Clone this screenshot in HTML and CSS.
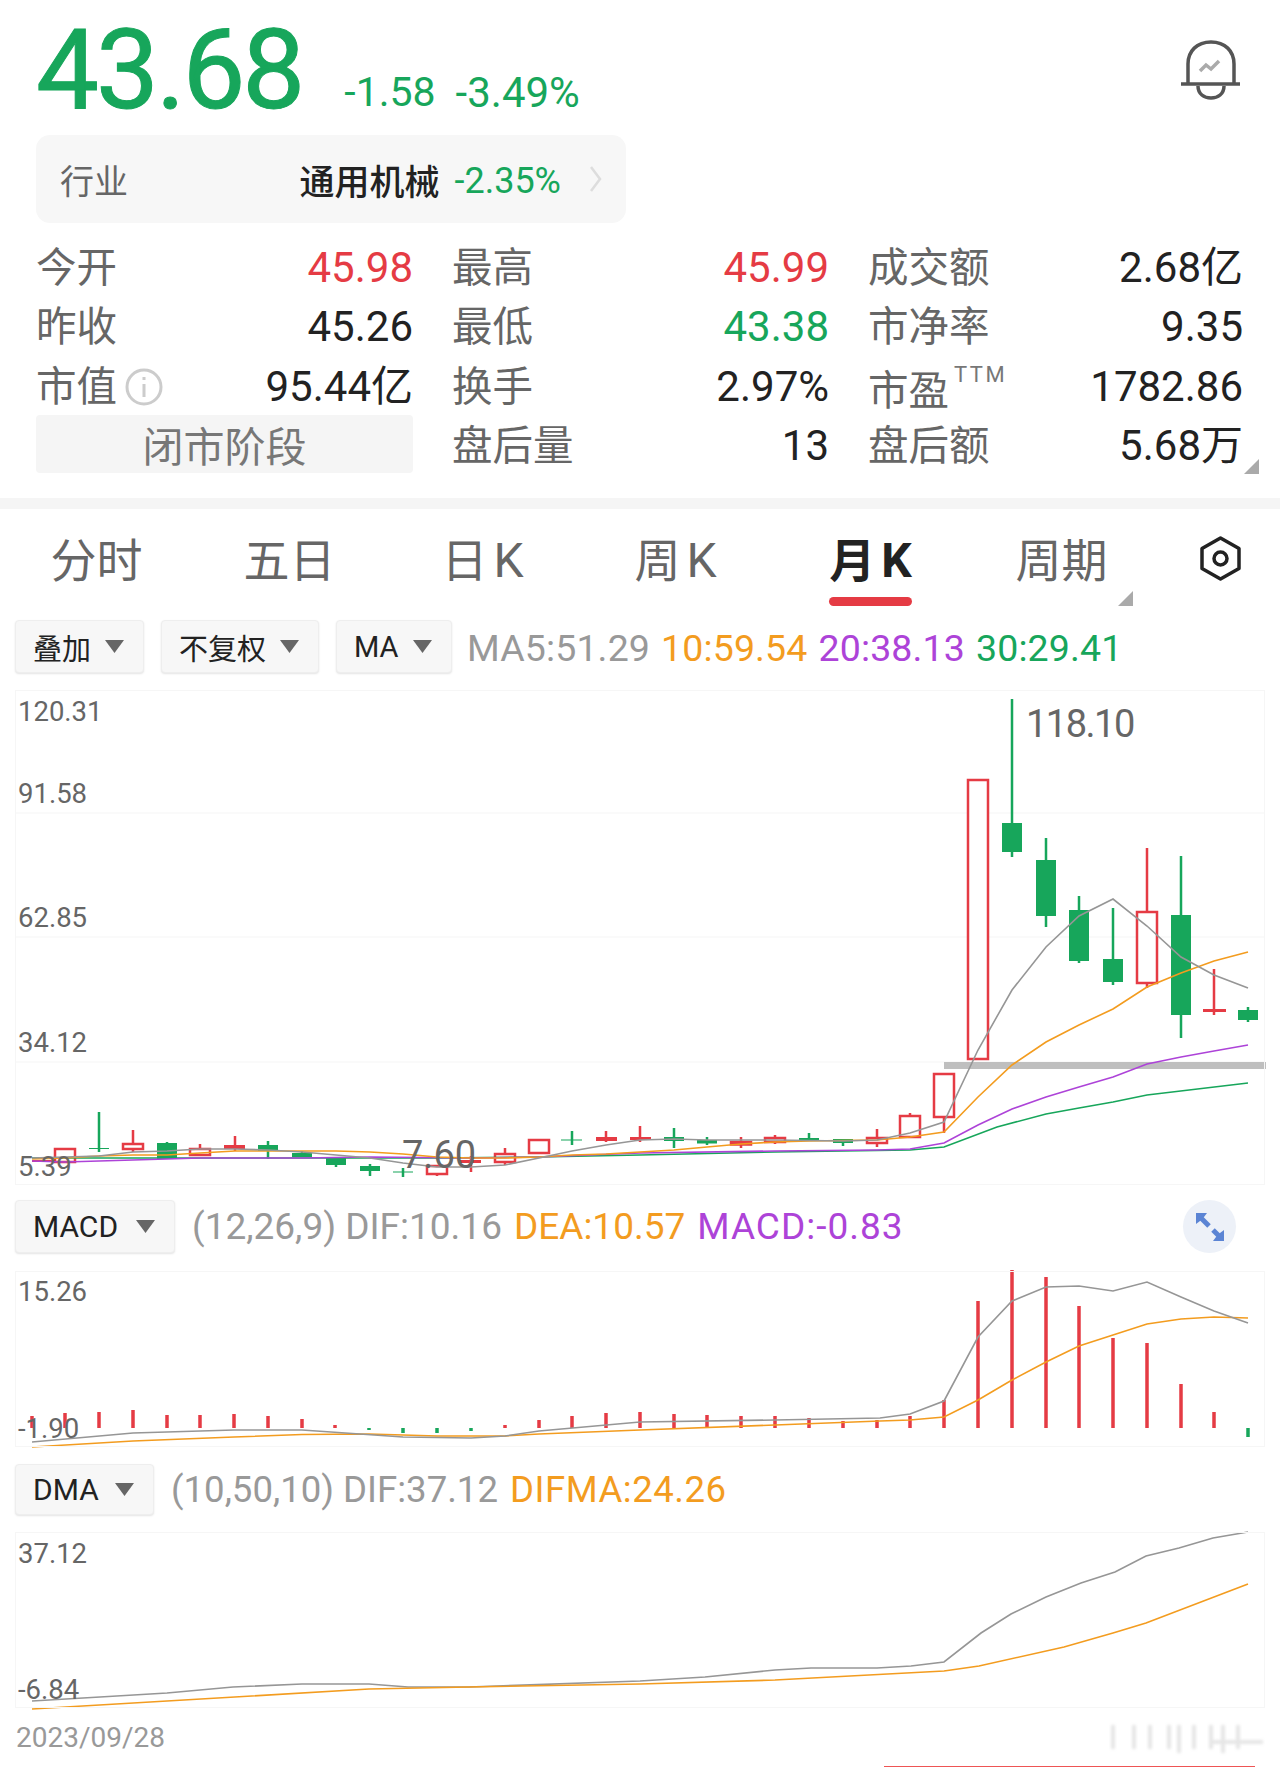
FILE: index.html
```html
<!DOCTYPE html>
<html lang="zh">
  <head>
    <meta charset="UTF-8" />
    <title>43.68 月K</title>
    <link rel="stylesheet" href="styles.css">
  </head>
  <body>
    <div class="head">
      <div class="price">43.68</div>
      <div class="change">-1.58</div>
      <div class="change change-pct">-3.49%</div>
      <svg class="bell" width="60" height="60" viewBox="0 0 60 60">
        <path class="bell-line" d="M7 43V24C7 11 16 2 30 2s23 9 23 22v19" />
        <path class="bell-line" d="M0 44H59" />
        <path class="bell-line" d="M17 46c0 8 6 12 13 12s13-4 13-12" />
        <path class="bell-zig" d="M19 31l6-6 5 4 8-8" />
      </svg>
    </div>

    <div class="industry">
      <span class="industry-label">行业</span>
      <span class="industry-name">通用机械</span>
      <span class="industry-pct">-2.35%</span>
      <svg class="chevron" width="13" height="28" viewBox="0 0 13 28">
        <path d="M2 2l9 12-9 12" />
      </svg>
    </div>

    <div class="stats">
      <div class="cell"><span class="lbl">今开</span><span class="val up">45.98</span></div>
      <div class="cell"><span class="lbl">最高</span><span class="val up">45.99</span></div>
      <div class="cell"><span class="lbl">成交额</span><span class="val">2.68亿</span></div>

      <div class="cell"><span class="lbl">昨收</span><span class="val">45.26</span></div>
      <div class="cell"><span class="lbl">最低</span><span class="val down">43.38</span></div>
      <div class="cell"><span class="lbl">市净率</span><span class="val">9.35</span></div>

      <div class="cell">
        <span class="lbl lbl-info">市值
          <svg class="info" width="38" height="38" viewBox="0 0 38 38">
            <circle cx="19" cy="19" r="17" />
            <path d="M19 16v13M19 9v3" />
          </svg>
        </span>
        <span class="val">95.44亿</span>
      </div>
      <div class="cell"><span class="lbl">换手</span><span class="val">2.97%</span></div>
      <div class="cell">
        <span class="lbl lbl-pe">市盈<span class="ttm">TTM</span></span>
        <span class="val">1782.86</span>
      </div>

      <div class="cell cell-phase">闭市阶段</div>
      <div class="cell"><span class="lbl">盘后量</span><span class="val">13</span></div>
      <div class="cell"><span class="lbl">盘后额</span><span class="val">5.68万</span></div>
      <span class="corner corner-stats"></span>
    </div>

    <div class="divider"></div>

    <div class="tabs">
      <div class="tab"><span class="tab-label">分时</span></div>
      <div class="tab"><span class="tab-label">五日</span></div>
      <div class="tab"><span class="tab-label">日<span class="tab-k">K</span></span></div>
      <div class="tab"><span class="tab-label">周<span class="tab-k">K</span></span></div>
      <div class="tab tab-on"><span class="tab-label">月<span class="tab-k">K</span></span></div>
      <div class="tab"><span class="tab-label">周期</span><span class="corner corner-tab"></span></div>
      <svg class="gear" width="41" height="45" viewBox="0 0 41 45">
        <path d="M20.5 2L39 12.5V32.5L20.5 43L2 32.5V12.5Z" />
        <circle cx="20.5" cy="22.5" r="6.5" />
      </svg>
    </div>

    <div class="tools">
      <div class="pick pick-overlay">叠加<i class="caret"></i></div>
      <div class="pick pick-adjust">不复权<i class="caret"></i></div>
      <div class="pick pick-ma">MA<i class="caret"></i></div>
      <div class="legend legend-ma">
        <span class="c-gray">MA5:51.29</span>
        <span class="c-orange">10:59.54</span>
        <span class="c-purple">20:38.13</span>
        <span class="c-green">30:29.41</span>
      </div>
    </div>

    <svg class="chart chart-main" viewBox="15 690 1250 495">
      <path class="grid" d="M15 813H1265M15 937H1265M15 1062H1265" />
      <rect class="floor" x="944" y="1062" width="322" height="7" />

      <!-- wicks -->
      <path class="wick-g" d="M99 1112V1152M167 1142V1159M268 1141V1159M302 1151V1157M336 1158V1167M370 1164V1176M403 1168V1177M674 1128V1148M707 1137V1145M809 1133V1141M843 1139V1146M1012 699V857M1046 838V927M1079 896V963M1113 908V985M1181 856V1038M1248 1007V1022" />
      <path class="wick-g wick-thin" d="M89 1148.5H109M393 1172H413M561 1140H582" />
      <path class="wick-g" d="M572 1131V1145" />
      <path class="wick-r" d="M133 1130V1152M200 1144V1156M235 1136V1151M437 1172V1176M471 1156V1172M505 1148V1165M606 1131V1142M640 1126V1142M741 1137V1148M775 1135V1144M877 1129V1147M910 1113V1116M944 1115V1133M1147 848V988M1214 969V1015" />

      <!-- bodies -->
      <path class="body-g" d="M157 1143h20v16h-20zM258 1145h20v6h-20zM292 1153h20v4h-20zM326 1158h20v7h-20zM360 1166h20v5h-20zM664 1137h20v4h-20zM697 1140h20v3.5h-20zM799 1138h20v2h-20zM833 1139h20v4h-20zM1002 823h20v29h-20zM1036 860h20v56h-20zM1069 910h20v51h-20zM1103 959h20v23h-20zM1171 915h20v100h-20zM1238 1010h20v10h-20z" />
      <path class="body-r" d="M32 1160h23v2h-23zM224 1145h21v4h-21zM460 1160h21v3h-21zM596 1137h21v4h-21zM630 1137h21v3h-21zM1203 1009h23v3h-23z" />
      <path class="body-hollow" d="M55 1149h20v13h-20zM123 1144h20v5h-20zM190 1149h20v6h-20zM427 1166h20v8h-20zM495 1154h20v8h-20zM529 1140h20v13h-20zM731 1142h20v2.5h-20zM765 1138h20v4h-20zM867 1138h20v5h-20zM900 1116h20v21h-20zM934 1074h20v43h-20zM968 780h20v279h-20zM1137 912h20v71h-20z" />

      <!-- moving averages -->
      <polyline class="ln-green" points="32,1158 65,1158 200,1158 302,1158 437,1158 539,1157 640,1155 775,1152 910,1150 944,1147 997,1127 1046,1114 1079,1108 1113,1102 1147,1095 1248,1083" />
      <polyline class="ln-purple" points="32,1161 65,1162 133,1160 200,1158 302,1158 370,1157 471,1158 539,1157 640,1153 775,1151 877,1150 910,1149 944,1143 978,1125 1012,1109 1046,1097 1079,1087 1113,1077 1147,1064 1181,1057 1214,1051 1248,1045" />
      <polyline class="ln-orange" points="32,1159 65,1158 99,1156 133,1155 167,1155 200,1153 235,1151 302,1151 336,1151 370,1152 403,1154 437,1157 471,1158 505,1158 539,1157 572,1155 606,1154 640,1152 674,1150 707,1147 741,1144 775,1142 809,1141 877,1140 910,1137 944,1132 978,1097 1012,1065 1046,1042 1079,1025 1113,1009 1147,987 1181,973 1214,961 1248,952" />
      <polyline class="ln-gray" points="32,1158 65,1157 99,1156 133,1152 167,1151 200,1149 235,1149 268,1150 302,1152 336,1155 370,1158 403,1163 437,1167 471,1167 505,1165 539,1158 572,1151 606,1145 640,1140 674,1139 707,1140 775,1140 843,1141 877,1140 910,1133 944,1122 978,1050 1012,990 1046,947 1079,916 1113,899 1147,926 1181,957 1214,975 1248,988" />

      <text class="axis" x="18" y="721">120.31</text>
      <text class="axis" x="18" y="803">91.58</text>
      <text class="axis" x="18" y="927">62.85</text>
      <text class="axis" x="18" y="1052">34.12</text>
      <text class="axis" x="18" y="1176">5.39</text>
      <text class="mark mark-hi" x="1026" y="737">118.10</text>
      <text class="mark" x="402" y="1168">7.60</text>
    </svg>

    <div class="tools tools-macd">
      <div class="pick pick-macd">MACD<i class="caret"></i></div>
      <div class="legend legend-macd">
        <span class="c-gray">(12,26,9) DIF:10.16</span>
        <span class="c-orange">DEA:10.57</span>
        <span class="c-purple c-wide">MACD:-0.83</span>
      </div>
      <div class="expand">
        <svg width="34" height="34" viewBox="0 0 34 34">
          <path class="expand-arrow" d="M8 8L16 16" />
          <path class="expand-head" d="M3 3H14L11 7L7 11L3 14Z" />
          <path class="expand-arrow" d="M20 20L28 28" />
          <path class="expand-head" d="M31 31H20L23 27L27 23L31 20Z" />
        </svg>
      </div>
    </div>

    <svg class="chart chart-low" viewBox="15 1271 1250 176">
      <path class="bar-r" d="M32 1428V1416M65 1428V1413M99 1428V1412M133 1428V1410M167 1428V1415M200 1428V1415M234 1428V1414M268 1428V1416M302 1428V1419M335 1428V1425M505 1428V1425M539 1428V1420M572 1428V1416M606 1428V1413M640 1428V1412M674 1428V1414M707 1428V1415M741 1428V1416M775 1428V1416M809 1428V1418M843 1428V1421M877 1428V1420M910 1428V1416M944 1428V1400M978 1428V1301M1012 1428V1270M1046 1428V1277M1079 1428V1306M1113 1428V1338M1147 1428V1343M1181 1428V1384M1214 1428V1412" />
      <path class="bar-g" d="M369 1428V1430M403 1428V1433M437 1428V1433M471 1428V1431M1248 1428V1437" />
      <polyline class="ln-orange" points="32,1447 133,1441 234,1437 302,1434.5 369,1434 437,1436 505,1436 539,1434 640,1430 775,1425 880,1421 910,1420 944,1417 978,1400 1012,1380 1046,1362 1079,1346 1113,1335 1147,1324 1181,1319 1214,1317 1248,1318" />
      <polyline class="ln-gray" points="32,1442 133,1433 234,1430 302,1430 403,1437 471,1438 505,1436 539,1431 640,1422 775,1420 880,1418 910,1414 944,1401 978,1337 1012,1301 1046,1287 1079,1286 1113,1291 1147,1282 1181,1297 1214,1311 1248,1323" />
      <text class="axis" x="18" y="1301">15.26</text>
      <text class="axis" x="18" y="1438">-1.90</text>
    </svg>

    <div class="tools tools-dma">
      <div class="pick pick-dma">DMA<i class="caret"></i></div>
      <div class="legend legend-dma">
        <span class="c-gray">(10,50,10) DIF:37.12</span>
        <span class="c-orange">DIFMA:24.26</span>
      </div>
    </div>

    <svg class="chart chart-low chart-dma" viewBox="15 1532 1250 176">
      <polyline class="ln-gray" points="32,1701 100,1697 167,1693 233,1687 302,1684 369,1684 408,1687 469,1687 640,1681 705,1677 775,1670 811,1668 877,1668 911,1666 944,1662 981,1633 1011,1614 1046,1597 1081,1583 1115,1572 1146,1556 1179,1548 1213,1538 1248,1532" />
      <polyline class="ln-orange" points="32,1709 167,1701 369,1689 469,1687 640,1684 775,1680 944,1671 979,1666 1064,1647 1113,1633 1146,1623 1248,1584" />
      <text class="axis" x="18" y="1563">37.12</text>
      <text class="axis" x="18" y="1699">-6.84</text>
    </svg>

    <div class="foot">
      <span class="date">2023/09/28</span>
      <svg class="stamp" width="155" height="32" viewBox="0 0 155 32">
        <path d="M4 2V26M25 2V26M41 2V26M60 2V26M70 2V30M85 2V26M102 2V26M114 2V30M129 2V26" />
        <path d="M100 19H154" />
      </svg>
    </div>
    <div class="redline"></div>
  </body>
</html>
```

FILE: styles.css
```css
* {
  box-sizing: border-box;
}

html,
body {
  margin: 0;
  background: #fff;
}

body {
  width: 1280px;
  font-family: Roboto, "Noto Sans CJK SC", sans-serif;
  color: #222;
}

.head {
  display: flex;
  height: 135px;
  padding: 14px 39px 0 36px;
}

.price {
  font-size: 112px;
  line-height: 112px;
  letter-spacing: -3px;
  color: #17a65b;
  -webkit-text-stroke: 1px #17a65b;
}

.change {
  margin: 58px 0 0 42px;
  font-size: 41px;
  line-height: 41px;
  color: #17a65b;
}

.change-pct {
  margin-left: 20px;
  font-size: 42px;
}

.bell {
  margin: 26px 0 0 auto;
}

.bell-line {
  fill: none;
  stroke: #555;
  stroke-width: 3.5;
}

.bell-zig {
  fill: none;
  stroke: #aaa;
  stroke-width: 3.5;
}

.industry {
  display: flex;
  align-items: center;
  width: 590px;
  height: 88px;
  margin-left: 36px;
  padding: 0 24px;
  background: #f7f7f7;
  border-radius: 14px;
}

.industry-label {
  font-size: 34px;
  color: #666;
}

.industry-name {
  margin-left: auto;
  font-size: 35px;
  font-weight: 500;
  color: #222;
}

.industry-pct {
  margin: 4px 28px 0 15px;
  font-size: 36px;
  color: #17a65b;
}

.chevron path {
  fill: none;
  stroke: #ddd;
  stroke-width: 2.5;
}

.stats {
  position: relative;
  display: grid;
  grid-template-columns: 377px 377px 375px;
  grid-auto-rows: 59.5px;
  column-gap: 39px;
  margin-top: 15px;
  padding-left: 36px;
}

.cell {
  display: flex;
  align-items: center;
  justify-content: space-between;
}

.lbl {
  font-size: 40.5px;
  line-height: 40px;
  color: #666;
}

.val {
  font-size: 42px;
  line-height: 42px;
  color: #222;
}

.up {
  color: #e53b44;
}

.down {
  color: #17a65b;
}

.lbl-info {
  display: flex;
  align-items: center;
  gap: 8px;
}

.info circle {
  fill: none;
  stroke: #ccc;
  stroke-width: 3;
}

.info path {
  fill: none;
  stroke: #ccc;
  stroke-width: 3;
}

.lbl-pe {
  display: flex;
  padding-top: 8px;
}

.ttm {
  margin: -7px 0 0 5px;
  font-size: 22px;
  line-height: 22px;
  letter-spacing: 2.5px;
  color: #777;
}

.cell-phase {
  justify-content: center;
  height: 58px;
  margin-top: -1.5px;
  font-size: 41px;
  color: #777;
  background: #f5f5f5;
  border-radius: 4px;
}

.corner {
  position: absolute;
  width: 15px;
  height: 15px;
  background: #aaa;
  clip-path: polygon(100% 0, 100% 100%, 0 100%);
}

.corner-stats {
  left: 1244px;
  bottom: 2px;
}

.corner-tab {
  right: 25px;
  bottom: 0;
}

.divider {
  height: 11px;
  margin-top: 22px;
  background: #f5f5f5;
}

.tabs {
  display: flex;
  height: 97px;
}

.tab {
  position: relative;
  display: flex;
  justify-content: center;
  width: 193px;
  padding-top: 29px;
  font-size: 46px;
  line-height: 46px;
  color: #666;
}

.tab-label {
  display: block;
}

.tab-k {
  margin-left: 6px;
  font-size: 48px;
}

.tab-on {
  padding-left: 4px;
  font-weight: 700;
  color: #222;
}

.tab-on .tab-label::after {
  content: "";
  display: block;
  height: 9px;
  margin-top: 13px;
  border-radius: 5px;
  background: #e53b44;
}

.gear {
  margin: 27px 0 0 42px;
}

.gear path,
.gear circle {
  fill: none;
  stroke: #222;
  stroke-width: 3.5;
  stroke-linejoin: round;
}

.tools {
  display: flex;
  align-items: center;
  gap: 17px;
  height: 53px;
  margin-top: 14px;
  padding-left: 15px;
}

.tools-macd {
  height: 53px;
  margin-top: 15px;
  padding-right: 44px;
}

.tools-dma {
  height: 51px;
  margin-top: 17px;
}

.pick {
  display: flex;
  align-items: center;
  justify-content: space-between;
  height: 100%;
  padding: 0 19px 0 17px;
  font-size: 29px;
  color: #222;
  background: #f7f7f7;
  border: 1px solid #eee;
  border-radius: 4px;
  box-shadow: 0 1px 2px #e4e4e4;
}

.pick-overlay {
  width: 129px;
}

.pick-adjust {
  width: 158px;
}

.pick-ma {
  width: 116px;
}

.pick-macd {
  width: 160px;
  font-size: 30px;
}

.pick-dma {
  width: 139px;
  font-size: 30px;
}

.caret {
  width: 19px;
  height: 13px;
  background: #666;
  clip-path: polygon(0 0, 100% 0, 50% 100%);
}

.legend {
  display: flex;
  white-space: nowrap;
}

.legend-ma {
  gap: 11px;
  margin-left: -2px;
  padding-top: 2px;
  font-size: 37.5px;
  letter-spacing: .13px;
}

.legend-macd {
  gap: 12px;
  font-size: 37px;
}

.legend-dma {
  gap: 12px;
  font-size: 36.6px;
}

.legend-dma .c-orange {
  letter-spacing: .5px;
}

.c-gray {
  color: #999;
}

.c-orange {
  color: #f39c1f;
}

.c-purple {
  color: #ad43d8;
}

.c-green {
  color: #17a65b;
}

.c-wide {
  letter-spacing: 1px;
}

.chart {
  display: block;
  width: 1250px;
  margin: 18px 0 0 15px;
  overflow: visible;
  outline: 1px solid #f6f6f6;
  outline-offset: -1px;
}

.chart-main {
  height: 495px;
  margin-top: 17px;
}

.chart-low {
  height: 176px;
}

.chart-dma {
  margin-top: 17px;
}

.grid {
  fill: none;
  stroke: #f5f5f5;
  stroke-width: 1;
}

.floor {
  fill: #bfbfbf;
}

.wick-g {
  fill: none;
  stroke: #17a65b;
  stroke-width: 2.5;
}

.wick-thin {
  stroke-width: 1.2;
}

.wick-r {
  fill: none;
  stroke: #e53b44;
  stroke-width: 2.5;
}

.body-g {
  fill: #17a65b;
}

.body-r {
  fill: #e53b44;
}

.body-hollow {
  fill: #fff;
  stroke: #e53b44;
  stroke-width: 2.5;
}

.ln-gray,
.ln-orange,
.ln-purple,
.ln-green {
  fill: none;
  stroke-width: 1.6;
}

.ln-gray {
  stroke: #969696;
}

.ln-orange {
  stroke: #f39c1f;
}

.ln-purple {
  stroke: #ad43d8;
}

.ln-green {
  stroke: #17a65b;
}

.bar-r {
  fill: none;
  stroke: #e53b44;
  stroke-width: 3.5;
}

.bar-g {
  fill: none;
  stroke: #17a65b;
  stroke-width: 3.5;
}

.axis {
  font-size: 27.5px;
  fill: #666;
}

.mark {
  font-size: 38px;
  fill: #666;
}

.mark-hi {
  letter-spacing: -1.5px;
}

.expand {
  display: flex;
  align-items: center;
  justify-content: center;
  width: 53px;
  height: 53px;
  margin-left: auto;
  border-radius: 50%;
  background: #edf1f8;
}

.expand-arrow {
  fill: none;
  stroke: #5b84d4;
  stroke-width: 5;
}

.expand-head {
  fill: #5b84d4;
}

.foot {
  display: flex;
  align-items: flex-start;
  justify-content: space-between;
  height: 43px;
  margin-top: 15px;
  padding: 0 16px;
  font-size: 28px;
  line-height: 30px;
  color: #999;
}

.stamp {
  filter: blur(1.5px);
}

.stamp path {
  fill: none;
  stroke: #e6e6e6;
  stroke-width: 4;
}

.redline {
  height: 1px;
  margin: 0 25px 0 884px;
  background: #e55;
}
```
